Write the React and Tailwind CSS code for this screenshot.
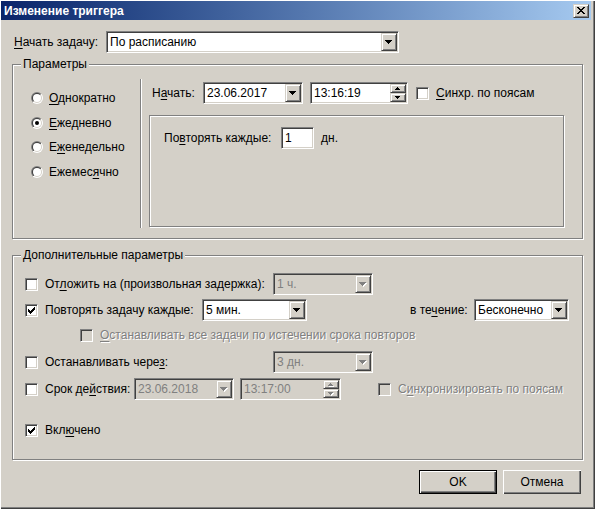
import React from 'react'

const sunken =
  'border border-t-[#808080] border-l-[#808080] border-r-white border-b-white shadow-[inset_1px_1px_0_#404040,inset_-1px_-1px_0_#d4d0c8]'
const raisedSmall =
  'border border-t-[#d4d0c8] border-l-[#d4d0c8] border-r-[#404040] border-b-[#404040] shadow-[inset_1px_1px_0_#fff,inset_-1px_-1px_0_#808080] bg-[#d4d0c8]'
const etched = 'border border-[#808080] shadow-[inset_1px_1px_0_#fff,1px_1px_0_#fff]'
const grayed = 'text-[#808080] [text-shadow:1px_1px_0_#fff]'

function U({ children }) {
  return <span className="underline underline-offset-[2px] decoration-1">{children}</span>
}

function Arrow({ disabled }) {
  const rows = [
    [0, 0, 7],
    [1, 1, 5],
    [2, 2, 3],
    [3, 3, 1],
  ]
  return (
    <svg width="8" height="5" viewBox="0 0 8 5" shapeRendering="crispEdges">
      {disabled &&
        rows.map(([x, y, w]) => <rect key={'s' + y} x={x + 1} y={y + 1} width={w} height="1" fill="#fff" />)}
      {rows.map(([x, y, w]) => (
        <rect key={y} x={x} y={y} width={w} height="1" fill={disabled ? '#808080' : '#000'} />
      ))}
    </svg>
  )
}

function SmallArrow({ up, disabled }) {
  const rows = up
    ? [
        [2, 0, 1],
        [1, 1, 3],
        [0, 2, 5],
      ]
    : [
        [0, 0, 5],
        [1, 1, 3],
        [2, 2, 1],
      ]
  return (
    <svg width="6" height="4" viewBox="0 0 6 4" shapeRendering="crispEdges">
      {disabled &&
        rows.map(([x, y, w]) => <rect key={'s' + y} x={x + 1} y={y + 1} width={w} height="1" fill="#fff" />)}
      {rows.map(([x, y, w]) => (
        <rect key={y} x={x} y={y} width={w} height="1" fill={disabled ? '#808080' : '#000'} />
      ))}
    </svg>
  )
}

function Combo({ value, className, disabled }) {
  return (
    <div className={`${sunken} ${className} h-[22px] p-[1px] flex ${disabled ? 'bg-[#d4d0c8]' : 'bg-white'}`}>
      <div className={`flex-1 flex items-center pl-[2px] ${disabled ? 'text-[#808080]' : 'text-black'}`}>{value}</div>
      <div className={`${raisedSmall} w-[16px] flex items-center justify-center`}>
        <Arrow disabled={disabled} />
      </div>
    </div>
  )
}

function Spin({ value, className, disabled }) {
  return (
    <div className={`${sunken} ${className} h-[22px] p-[1px] flex ${disabled ? 'bg-[#d4d0c8]' : 'bg-white'}`}>
      <div className={`flex-1 flex items-center pl-[2px] ${disabled ? 'text-[#808080]' : 'text-black'}`}>{value}</div>
      <div className="w-[16px] flex flex-col">
        <div className={`${raisedSmall} h-[9px] flex items-center justify-center`}>
          <SmallArrow up disabled={disabled} />
        </div>
        <div className={`${raisedSmall} h-[9px] flex items-center justify-center`}>
          <SmallArrow disabled={disabled} />
        </div>
      </div>
    </div>
  )
}

function Check({ checked, disabled }) {
  return (
    <div className={`${sunken} w-[13px] h-[13px] shrink-0 p-[1px] ${disabled ? 'bg-[#d4d0c8]' : 'bg-white'}`}>
      {checked && (
        <svg width="9" height="9" viewBox="0 0 9 9" shapeRendering="crispEdges">
          {[
            [1, 3],
            [2, 4],
            [3, 5],
            [4, 4],
            [5, 3],
            [6, 2],
            [7, 1],
          ].map(([x, y]) => (
            <rect key={x} x={x} y={y} width="1" height="3" fill="#000" />
          ))}
        </svg>
      )}
    </div>
  )
}

function Radio({ checked, id }) {
  return (
    <svg width="12" height="12" viewBox="0 0 12 12" className="shrink-0">
      <defs>
        <linearGradient id={'o' + id} x1="0" y1="0" x2="1" y2="1">
          <stop offset="0.5" stopColor="#808080" />
          <stop offset="0.5" stopColor="#ffffff" />
        </linearGradient>
        <linearGradient id={'i' + id} x1="0" y1="0" x2="1" y2="1">
          <stop offset="0.5" stopColor="#404040" />
          <stop offset="0.5" stopColor="#d4d0c8" />
        </linearGradient>
      </defs>
      <circle cx="6" cy="6" r="6" fill={`url(#o${id})`} />
      <circle cx="6" cy="6" r="5" fill={`url(#i${id})`} />
      <circle cx="6" cy="6" r="4" fill="#fff" />
      {checked && <circle cx="6" cy="6" r="2" fill="#000" />}
    </svg>
  )
}

function Group({ label, className, children }) {
  return (
    <div className={`${etched} relative ml-[12px] w-[571px] ${className}`}>
      <div className="absolute -top-[8px] left-[8px] px-[2px] bg-[#d4d0c8] leading-[14px]">{label}</div>
      {children}
    </div>
  )
}

function WinButton({ children, isDefault }) {
  return (
    <div
      className={`w-[78px] h-[24px] flex items-center justify-center ${
        isDefault
          ? 'border border-black shadow-[inset_1px_1px_0_#fff,inset_-1px_-1px_0_#404040,inset_-2px_-2px_0_#808080]'
          : 'shadow-[inset_1px_1px_0_#fff,inset_-1px_-1px_0_#404040,inset_-2px_-2px_0_#808080]'
      }`}
    >
      {children}
    </div>
  )
}

const radios = [
  { label: <><U>О</U>днократно</>, mt: 'mt-0' },
  { label: <><U>Е</U>жедневно</>, mt: 'mt-[11px]', checked: true },
  { label: <>Е<U>ж</U>енедельно</>, mt: 'mt-[10px]' },
  { label: <>Ежемес<U>я</U>чно</>, mt: 'mt-[11px]' },
]

export default function App() {
  return (
    <div className="w-[595px] h-[509px] bg-[#d4d0c8] text-black text-[12px] leading-[14px] font-['Liberation_Sans',Arial,sans-serif] shadow-[inset_1px_1px_0_#fff,inset_-1px_-1px_0_#404040,inset_-2px_-2px_0_#808080] flex flex-col overflow-hidden">
      {/* title bar */}
      <div className="ml-[1px] mt-[1px] w-[590px] h-[19px] flex items-center justify-between bg-gradient-to-r from-[#0a246a] to-[#a6caf0]">
        <div className="pl-[3px] text-white font-bold">Изменение триггера</div>
        <div className={`${raisedSmall} mr-[2px] w-[16px] h-[14px] flex items-center justify-center`}>
          <svg width="8" height="7" viewBox="0 0 8 7" shapeRendering="crispEdges">
            {[
              [0, 0, 2],
              [6, 0, 2],
              [1, 1, 2],
              [5, 1, 2],
              [2, 2, 4],
              [3, 3, 2],
              [2, 4, 4],
              [1, 5, 2],
              [5, 5, 2],
              [0, 6, 2],
              [6, 6, 2],
            ].map(([x, y, w], i) => (
              <rect key={i} x={x} y={y} width={w} height="1" fill="#000" />
            ))}
          </svg>
        </div>
      </div>

      {/* start task */}
      <div className="mt-[11px] pl-[14px] flex items-center">
        <div className="w-[92px]">
          <U>Н</U>ачать задачу:
        </div>
        <Combo value="По расписанию" className="w-[293px]" />
      </div>

      {/* parameters */}
      <Group label="Параметры" className="mt-[11px] h-[175px] flex">
        <div className="w-[127px] pl-[18px] pt-[26px] flex flex-col">
          {radios.map((r, i) => (
            <div key={i} className={`h-[14px] flex items-center ${r.mt}`}>
              <Radio checked={r.checked} id={i} />
              <span className="ml-[6px]">{r.label}</span>
            </div>
          ))}
        </div>
        <div className="mt-[14px] h-[149px] w-[2px] border-l border-l-[#808080] border-r border-r-white" />
        <div className="ml-[7px] pt-[17px] flex flex-col">
          <div className="h-[22px] flex items-center">
            <div className="w-[54px] pl-[3px]">
              Н<U>а</U>чать:
            </div>
            <Combo value="23.06.2017" className="w-[100px]" />
            <Spin value="13:16:19" className="ml-[7px] w-[98px]" />
            <div className="ml-[8px]">
              <Check />
            </div>
            <span className="ml-[7px]">
              <U>С</U>инхр. по поясам
            </span>
          </div>
          <div className={`${etched} mt-[11px] w-[415px] h-[112px] pl-[14px] pt-[11px]`}>
            <div className="h-[22px] flex items-center">
              <div className="w-[117px]">
                По<U>в</U>торять каждые:
              </div>
              <div className={`${sunken} w-[33px] h-[22px] bg-white flex items-center pl-[3px]`}>1</div>
              <span className="ml-[7px]">дн.</span>
            </div>
          </div>
        </div>
      </Group>

      {/* advanced */}
      <Group label="Дополнительные параметры" className="mt-[16px] h-[205px] pt-[17px]">
        <div className="h-[22px] pl-[12px] flex items-center">
          <Check />
          <div className="ml-[7px] w-[228px]">
            От<U>л</U>ожить на (произвольная задержка):
          </div>
          <Combo value="1 ч." className="w-[100px]" disabled />
        </div>
        <div className="mt-[4px] h-[22px] pl-[12px] flex items-center">
          <Check checked />
          <div className="ml-[7px] w-[157px]">Повторять задачу каждые:</div>
          <Combo value="5 мин." className="w-[105px]" />
          <div className="ml-[103px] w-[64px]">
            в те<U>ч</U>ение:
          </div>
          <Combo value="Бесконечно" className="w-[95px]" />
        </div>
        <div className="mt-[3px] h-[22px] pl-[67px] flex items-center">
          <Check disabled />
          <span className={`ml-[7px] ${grayed}`}>
            <U>О</U>станавливать все задачи по истечении срока повторов
          </span>
        </div>
        <div className="mt-[5px] h-[22px] pl-[12px] flex items-center">
          <Check />
          <div className="ml-[7px] w-[228px]">
            Останавливать чере<U>з</U>:
          </div>
          <Combo value="3 дн." className="w-[100px]" disabled />
        </div>
        <div className="mt-[5px] h-[22px] pl-[12px] flex items-center">
          <Check />
          <div className="ml-[7px] w-[89px]">
            Срок де<U>й</U>ствия:
          </div>
          <Combo value="23.06.2018" className="w-[100px]" disabled />
          <Spin value="13:17:00" className="ml-[6px] w-[101px]" disabled />
          <div className="ml-[37px]">
            <Check disabled />
          </div>
          <span className={`ml-[7px] ${grayed}`}>
            С<U>и</U>нхронизировать по поясам
          </span>
        </div>
        <div className="mt-[19px] h-[22px] pl-[12px] flex items-center">
          <Check checked />
          <span className="ml-[7px]">
            Вкл<U>ю</U>чено
          </span>
        </div>
      </Group>

      {/* buttons */}
      <div className="mt-[10px] pr-[14px] flex justify-end gap-[6px]">
        <WinButton isDefault>OK</WinButton>
        <WinButton>Отмена</WinButton>
      </div>
    </div>
  )
}
